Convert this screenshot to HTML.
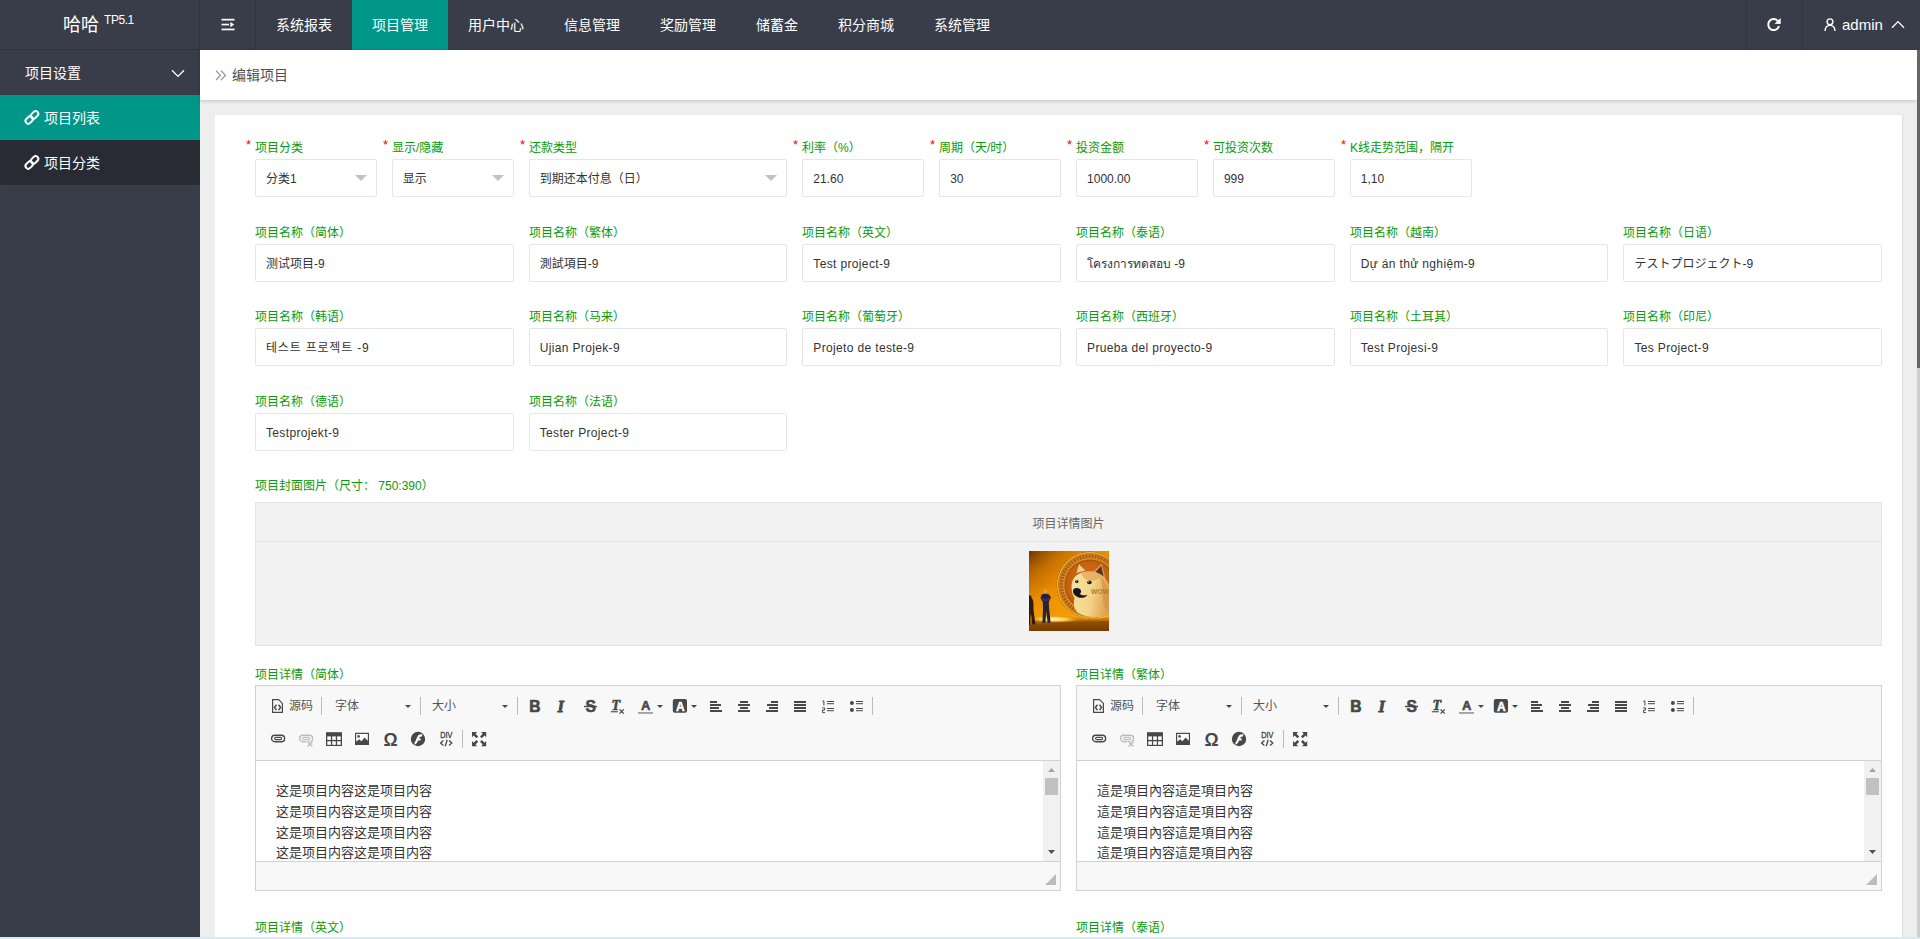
<!DOCTYPE html>
<html lang="zh-CN">
<head>
<meta charset="utf-8">
<title>编辑项目</title>
<style>
*{box-sizing:border-box;margin:0;padding:0}
html,body{width:1920px;height:939px;overflow:hidden}
body{position:relative;background:#eeeeee;font-family:"Liberation Sans","Noto Sans CJK SC",sans-serif;font-size:14px;color:#333;line-height:1}
svg{display:block;position:absolute;overflow:visible}
#hd{position:absolute;left:0;top:0;width:1920px;height:50px;background:#393d49}
#logo .t{position:absolute;left:63px;top:13px;font-size:18px;line-height:24px;white-space:nowrap;color:#fff}
#logo .s{position:absolute;left:104px;top:13px;font-size:12px;line-height:14px;color:#fff;letter-spacing:-0.45px}
.nav{position:absolute;top:0;height:50px;line-height:50px;color:#fff;font-size:14px;text-align:center;white-space:nowrap}
.nav.on{background:#009688}
.vsep{position:absolute;top:0;width:1px;height:50px;background:#32353f}
#admin{position:absolute;left:1842px;top:0;line-height:49px;font-size:15px;color:#fff}
#side{position:absolute;left:0;top:50px;width:200px;height:889px;background:#393d49}
.sitem{position:absolute;left:0;width:200px;height:45px;line-height:45px;color:#fff;font-size:14px;white-space:nowrap}
.sitem span{position:absolute;top:1px}
#crumb{position:absolute;left:200px;top:50px;width:1717px;height:50px;background:#fff;box-shadow:0 1px 4px rgba(0,0,0,.18)}
#crumb .t{position:absolute;left:32px;top:0;line-height:50px;font-size:14px;color:#505050}
#card{position:absolute;left:215px;top:115px;width:1687px;height:840px;background:#fff;box-shadow:1px 0 2px rgba(0,0,0,.06)}
.lb{position:absolute;font-size:12px;line-height:16px;color:#0a9a0a;white-space:nowrap}
.lb i{position:absolute;left:-9px;top:-3px;color:#ff0000;font-style:normal;font-size:13px}
.ip{position:absolute;height:38px;border:1px solid #e6e6e6;border-radius:2px;background:#fff;font-size:12px;line-height:37px;padding:1px 0 0 10px;color:#333;white-space:nowrap;overflow:hidden}
.ip.sel:after{content:"";position:absolute;right:9px;top:15px;border:6px solid transparent;border-top-color:#c2c2c2}
#imgp{position:absolute;left:255px;top:502px;width:1627px;height:144px;background:#f2f2f2;border:1px solid #e6e6e6}
#imgp .h{position:absolute;left:0;top:0;width:100%;height:39px;border-bottom:1px solid #e6e6e6;text-align:center;line-height:40px;padding-top:1px;font-size:12px;color:#666}
.ed{position:absolute;top:685px;width:806px;height:206px;border:1px solid #d1d1d1;background:#f8f8f8}
.ed .tb{position:absolute;left:0;top:0;width:804px;height:75px;border-bottom:1px solid #d1d1d1}
.ed .ct{position:absolute;left:0;top:75px;width:804px;height:101px;background:#fff;border-bottom:1px solid #d1d1d1;overflow:hidden}
.ed .ct p{position:absolute;left:20px;font-size:13px;line-height:21px;color:#333;white-space:nowrap}
.ed .sb{position:absolute;right:0;top:0;width:17px;height:100px;background:#f1f1f1}
.ed .th{position:absolute;left:2px;top:17px;width:13px;height:17px;background:#c1c1c1}
.ed .tx{position:absolute;font-size:12px;line-height:16px;color:#555;white-space:nowrap}
.ed .sp{position:absolute;width:1px;height:18px;background:#bcbcbc}
.ed .ar{position:absolute;width:0;height:0;border:3px solid transparent;border-top-color:#484848;border-bottom-width:0}
#vs{position:absolute;left:1917px;top:50px;width:3px;height:889px;background:#cfcfcf}
#vs div{width:3px;height:318px;background:#666}
#bl{position:absolute;left:0;top:937px;width:1920px;height:2px;background:#d6ebf3}
</style>
</head>
<body>
<div id="hd">
<div id="logo"><span class="t">哈哈</span><span class="s">TP5.1</span></div>
<div style="position:absolute;left:0;top:49px;width:199px;height:1px;background:rgba(0,0,0,.16)"></div>
<div class="vsep" style="left:199px"></div><div class="vsep" style="left:255px"></div>
<svg style="left:221px;top:18px" width="14" height="13" viewBox="0 0 14 13"><g fill="#fff"><rect x="0.5" y="0.8" width="13" height="1.7"/><rect x="0.5" y="5.7" width="7.5" height="1.7"/><rect x="0.5" y="10.6" width="13" height="1.7"/><path d="M9.3 3.9 L13.3 6.55 L9.3 9.2z"/></g></svg>
<div class="nav" style="left:256px;width:96px">系统报表</div>
<div class="nav on" style="left:352px;width:96px">项目管理</div>
<div class="nav" style="left:448px;width:96px">用户中心</div>
<div class="nav" style="left:544px;width:96px">信息管理</div>
<div class="nav" style="left:640px;width:96px">奖励管理</div>
<div class="nav" style="left:736px;width:82px">储蓄金</div>
<div class="nav" style="left:818px;width:96px">积分商城</div>
<div class="nav" style="left:914px;width:96px">系统管理</div>
<div class="vsep" style="left:1746px"></div><div class="vsep" style="left:1802px"></div>
<svg style="left:1766px;top:17px" width="15" height="15" viewBox="0 0 15 15"><path d="M11.6 3.7 A5.5 5.5 0 1 0 13 9.1" fill="none" stroke="#fff" stroke-width="2"/><path d="M14.7 0.9 V6.9 L8.5 6.7z" fill="#fff"/></svg>
<svg style="left:1824px;top:17px" width="12" height="15" viewBox="0 0 12 15"><circle cx="6" cy="4.8" r="2.9" fill="none" stroke="#fff" stroke-width="1.4"/><path d="M1 14 C1.2 10 3.4 8.4 6 8.4 C8.6 8.4 10.8 10 11 14" fill="none" stroke="#fff" stroke-width="1.4"/></svg>
<div id="admin">admin</div>
<svg style="left:1891px;top:20px" width="14" height="9" viewBox="0 0 14 9"><path d="M1 7.8 L7 1.6 L13 7.8" fill="none" stroke="#fff" stroke-width="1.3"/></svg>
</div>
<div id="side">
<div class="sitem" style="top:0"><span style="left:25px">项目设置</span><svg style="left:171px;top:19px" width="14" height="9" viewBox="0 0 14 9"><path d="M1 1.2 L7 7.4 L13 1.2" fill="none" stroke="#fff" stroke-width="1.3"/></svg></div>
<div class="sitem" style="top:45px;background:#009688"><svg style="left:24px;top:15px" width="16" height="15" viewBox="0 0 16 15"><g fill="none" stroke="#fff" stroke-width="2"><rect x="-4.1" y="-2.7" width="8.2" height="5.4" rx="2.7" transform="translate(5.2 10) rotate(-45)"/><rect x="-4.1" y="-2.7" width="8.2" height="5.4" rx="2.7" transform="translate(10.6 4.8) rotate(-45)"/></g></svg><span style="left:44px">项目列表</span></div>
<div class="sitem" style="top:90px;background:#282b33;border-radius:0 0 2px 2px"><svg style="left:24px;top:15px" width="16" height="15" viewBox="0 0 16 15"><g fill="none" stroke="#fff" stroke-width="2"><rect x="-4.1" y="-2.7" width="8.2" height="5.4" rx="2.7" transform="translate(5.2 10) rotate(-45)"/><rect x="-4.1" y="-2.7" width="8.2" height="5.4" rx="2.7" transform="translate(10.6 4.8) rotate(-45)"/></g></svg><span style="left:44px">项目分类</span></div>
</div>
<div id="crumb"><svg style="left:15px;top:20px" width="12" height="11" viewBox="0 0 12 11"><path d="M1 0.8 L5.4 5.4 L1 10 M6 0.8 L10.4 5.4 L6 10" fill="none" stroke="#999" stroke-width="1.3"/></svg><span class="t">编辑项目</span></div>
<div id="card"></div>
<div class="lb" style="left:255px;top:140px"><i>*</i>项目分类</div>
<div class="ip sel" style="left:255px;top:159px;width:121.84px">分类1</div>
<div class="lb" style="left:392px;top:140px"><i>*</i>显示/隐藏</div>
<div class="ip sel" style="left:391.84px;top:159px;width:121.84px">显示</div>
<div class="lb" style="left:529px;top:140px"><i>*</i>还款类型</div>
<div class="ip sel" style="left:528.68px;top:159px;width:258.68px">到期还本付息（日）</div>
<div class="lb" style="left:802px;top:140px"><i>*</i>利率（%）</div>
<div class="ip" style="left:802.36px;top:159px;width:121.84px">21.60</div>
<div class="lb" style="left:939px;top:140px"><i>*</i>周期（天/时）</div>
<div class="ip" style="left:939.2px;top:159px;width:121.84px">30</div>
<div class="lb" style="left:1076px;top:140px"><i>*</i>投资金额</div>
<div class="ip" style="left:1076.04px;top:159px;width:121.84px">1000.00</div>
<div class="lb" style="left:1213px;top:140px"><i>*</i>可投资次数</div>
<div class="ip" style="left:1212.88px;top:159px;width:121.84px">999</div>
<div class="lb" style="left:1350px;top:140px"><i>*</i>K线走势范围，隔开</div>
<div class="ip" style="left:1349.72px;top:159px;width:121.84px">1,10</div>
<div class="lb" style="left:255px;top:225px">项目名称（简体）</div>
<div class="ip" style="left:255px;top:244px;width:258.68px">测试项目-9</div>
<div class="lb" style="left:529px;top:225px">项目名称（繁体）</div>
<div class="ip" style="left:528.68px;top:244px;width:258.68px">測試項目-9</div>
<div class="lb" style="left:802px;top:225px">项目名称（英文）</div>
<div class="ip" style="left:802.36px;top:244px;width:258.68px;letter-spacing:0.35px">Test project-9</div>
<div class="lb" style="left:1076px;top:225px">项目名称（泰语）</div>
<div class="ip" style="left:1076.04px;top:244px;width:258.68px">โครงการทดสอบ -9</div>
<div class="lb" style="left:1350px;top:225px">项目名称（越南）</div>
<div class="ip" style="left:1349.72px;top:244px;width:258.68px;letter-spacing:0.35px">Dự án thử nghiệm-9</div>
<div class="lb" style="left:1623px;top:225px">项目名称（日语）</div>
<div class="ip" style="left:1623.4px;top:244px;width:258.68px">テストプロジェクト-9</div>
<div class="lb" style="left:255px;top:309px">项目名称（韩语）</div>
<div class="ip" style="left:255px;top:328px;width:258.68px;letter-spacing:0.8px">테스트 프로젝트 -9</div>
<div class="lb" style="left:529px;top:309px">项目名称（马来）</div>
<div class="ip" style="left:528.68px;top:328px;width:258.68px;letter-spacing:0.35px">Ujian Projek-9</div>
<div class="lb" style="left:802px;top:309px">项目名称（葡萄牙）</div>
<div class="ip" style="left:802.36px;top:328px;width:258.68px;letter-spacing:0.35px">Projeto de teste-9</div>
<div class="lb" style="left:1076px;top:309px">项目名称（西班牙）</div>
<div class="ip" style="left:1076.04px;top:328px;width:258.68px;letter-spacing:0.35px">Prueba del proyecto-9</div>
<div class="lb" style="left:1350px;top:309px">项目名称（土耳其）</div>
<div class="ip" style="left:1349.72px;top:328px;width:258.68px;letter-spacing:0.35px">Test Projesi-9</div>
<div class="lb" style="left:1623px;top:309px">项目名称（印尼）</div>
<div class="ip" style="left:1623.4px;top:328px;width:258.68px;letter-spacing:0.35px">Tes Project-9</div>
<div class="lb" style="left:255px;top:394px">项目名称（德语）</div>
<div class="ip" style="left:255px;top:413px;width:258.68px;letter-spacing:0.35px">Testprojekt-9</div>
<div class="lb" style="left:529px;top:394px">项目名称（法语）</div>
<div class="ip" style="left:528.68px;top:413px;width:258.68px;letter-spacing:0.35px">Tester Project-9</div>
<div class="lb" style="left:255px;top:478px">项目封面图片（尺寸： 750:390）</div>
<div id="imgp"><div class="h">项目详情图片</div>
<svg style="left:773px;top:48px" width="80" height="80" viewBox="0 0 80 80">
<defs>
<linearGradient id="sky" x1="0" y1="0" x2="0.55" y2="1"><stop offset="0" stop-color="#6e3600"/><stop offset="0.22" stop-color="#b86600"/><stop offset="0.5" stop-color="#ec8e00"/><stop offset="0.8" stop-color="#f59c00"/><stop offset="1" stop-color="#f8b020"/></linearGradient>
<linearGradient id="skyr" x1="0" y1="0" x2="1" y2="0"><stop offset="0" stop-color="#e88a00" stop-opacity="0"/><stop offset="1" stop-color="#f09000" stop-opacity="0.9"/></linearGradient>
<radialGradient id="glow" cx="0.45" cy="0.5" r="0.55"><stop offset="0" stop-color="#fffbe0"/><stop offset="0.45" stop-color="#ffd860" stop-opacity="0.95"/><stop offset="1" stop-color="#f7a400" stop-opacity="0"/></radialGradient>
<radialGradient id="coin" cx="0.5" cy="0.5" r="0.5"><stop offset="0" stop-color="#d4741a"/><stop offset="0.7" stop-color="#c4600e"/><stop offset="0.74" stop-color="#a85008"/><stop offset="0.78" stop-color="#d98c28"/><stop offset="0.94" stop-color="#cc7814"/><stop offset="0.97" stop-color="#e8b040"/><stop offset="1" stop-color="#a05a0a"/></radialGradient>
<linearGradient id="gnd" x1="0" y1="0" x2="0" y2="1"><stop offset="0" stop-color="#e89410"/><stop offset="0.4" stop-color="#a85e04"/><stop offset="1" stop-color="#6e3a02"/></linearGradient>
<linearGradient id="fur" x1="0" y1="0" x2="1" y2="0.2"><stop offset="0" stop-color="#f8e4a0"/><stop offset="0.6" stop-color="#f2d488"/><stop offset="1" stop-color="#e0a450"/></linearGradient>
<clipPath id="cp"><rect width="80" height="80"/></clipPath>
</defs>
<g clip-path="url(#cp)">
<rect width="80" height="80" fill="url(#sky)"/>
<rect width="80" height="30" fill="url(#skyr)"/>
<circle cx="61" cy="34" r="33.4" fill="url(#coin)"/>
<circle cx="61" cy="34" r="28.6" fill="none" stroke="#7a3c06" stroke-width="3.4" stroke-dasharray="1.6 1.5" opacity="0.55"/>
<circle cx="61" cy="34" r="32.4" fill="none" stroke="#f0c050" stroke-width="1" stroke-dasharray="0.8 0.8" opacity="0.8"/>
<path d="M0 68 Q24 63.5 46 66 Q60 70 80 66 V80 H0z" fill="url(#gnd)"/>
<ellipse cx="27" cy="68.2" rx="25" ry="3.4" fill="url(#glow)"/>
<path d="M0 74 Q30 70.5 80 70 V80 H0z" fill="#7a4002" opacity="0.55"/>
<path d="M47.4 22 L50 13.2 L56.4 19.6z" fill="#f0c890"/>
<path d="M64 21 L72.6 12.6 L76.6 28z" fill="#d89858"/>
<path d="M66.4 21 L72.2 15 L74.6 25.4z" fill="#5a3420"/>
<path d="M42.6 36 C42 25 52 19.4 62 20.6 C72 21 79 28 81 38 V64 C70 67.6 56 66.6 48.6 61.6 C44 57 44.4 51 45.6 47 C43 43.6 42.6 39.6 42.6 36z" fill="url(#fur)"/>
<path d="M52 21.4 C58 19.6 66 20.2 72 24 C70 29 64 31 58.6 29 C55.6 27.6 53 25 52 21.4z" fill="#e2a858" opacity="0.75"/>
<path d="M70 24 C76 28 79 36 80 46 V62 C76 58 73 50 73.4 42 C73.6 34 72.6 28 70 24z" fill="#d8904a" opacity="0.7"/>
<ellipse cx="47.8" cy="30.5" rx="1.7" ry="1.5" fill="#1e1410"/>
<ellipse cx="60.4" cy="31.4" rx="2.3" ry="1.8" fill="#1e1410"/>
<circle cx="47.4" cy="30" r="0.5" fill="#fff"/><circle cx="59.8" cy="30.8" r="0.6" fill="#fff"/>
<path d="M44 39.6 C44.4 36.8 48.6 36.4 51 38 C52.4 39.2 52.4 41.6 51 43 C53.4 45 56.4 44.6 58.2 43.4 C57.6 46.6 52 47.8 48.6 46 C45.4 44.6 43.6 42.4 44 39.6z" fill="#181424"/>
<text x="62" y="43.2" font-family="Liberation Sans, sans-serif" font-size="6.8" font-weight="bold" fill="#b47c24">WOW</text>
<path d="M0 44.4 C1.6 44 2.8 45.4 2.6 47 C4.4 48.6 4.8 53 4.4 58 L6.4 73.6 H3.4 L1.8 62 L1 73.8 H0z" fill="#2c1c0c"/>
<circle cx="16.3" cy="40.2" r="1.9" fill="#d0a060"/>
<path d="M16.3 38 C17.6 38 18.4 38.8 18.3 40 C17.6 39.2 15.6 39.2 14.4 40 C14.4 38.8 15.2 38 16.3 38z" fill="#c8a040"/>
<path d="M12.8 43.6 C14.6 42.4 18 42.4 20 43.6 L22 46.4 L20.4 49.6 L19.8 51 L20.2 58 L21.6 71.8 H18.6 L17.2 60 L16.4 72 H13.4 L14 58 L13.8 51 L11.4 47z" fill="#26223a"/>
<path d="M11.8 46.4 L16.6 48.4 L21.6 46 L20.6 49.2 L16.4 50.2 L12.4 48.8z" fill="#3a3658"/>
</g>
</svg>
</div>
<div class="lb" style="left:255px;top:667px">项目详情（简体）</div>
<div class="ed" style="left:255px">
<div class="tb">
<svg style="left:14px;top:12px" width="16" height="16" viewBox="0 0 16 16"><path d="M2.6 1.6 H8.6 L12.4 5.4 V14.4 H2.6z" fill="none" stroke="#484848" stroke-width="1.2"/><path d="M6.5 6.7 L4.4 9.4 L6.5 12.1 M8.5 6.7 L10.6 9.4 L8.5 12.1" fill="none" stroke="#484848" stroke-width="1.5"/></svg>
<span class="tx" style="left:33px;top:12px">源码</span>
<span class="sp" style="left:65px;top:11px"></span>
<span class="tx" style="left:79px;top:12px">字体</span><span class="ar" style="left:149px;top:19px"></span>
<span class="sp" style="left:164px;top:11px"></span>
<span class="tx" style="left:176px;top:12px">大小</span><span class="ar" style="left:246px;top:19px"></span>
<span class="sp" style="left:261px;top:11px"></span>
<svg style="left:270px;top:12px" width="16" height="16" viewBox="0 0 16 16"><text x="3.2" y="14" font-family="Liberation Sans, sans-serif" font-size="15.6" font-weight="bold"  stroke="#484848" stroke-width="0.7" stroke-linejoin="round" fill="#484848">B</text></svg>
<svg style="left:298px;top:12px" width="16" height="16" viewBox="0 0 16 16"><text x="3.6" y="14" font-family="Liberation Serif, serif" font-size="16.6" font-weight="bold" font-style="italic" stroke="#484848" stroke-width="0.8" stroke-linejoin="round" fill="#484848">I</text></svg>
<svg style="left:326px;top:12px" width="16" height="16" viewBox="0 0 16 16"><text x="3.4" y="14" font-family="Liberation Sans, sans-serif" font-size="15.6" font-weight="bold"  stroke="#484848" stroke-width="0.6" stroke-linejoin="round" fill="#484848">S</text><rect x="2" y="7.8" width="13" height="1.4" fill="#484848"/></svg>
<svg style="left:354px;top:12px" width="16" height="16" viewBox="0 0 16 16"><text x="1.6" y="12.4" font-family="Liberation Serif, serif" font-size="14" font-weight="bold" font-style="italic" stroke="#484848" stroke-width="0.6" stroke-linejoin="round" fill="#484848">T</text><rect x="0.8" y="13.2" width="7" height="1.1" fill="#484848"/><path d="M9.6 11.4 L13.8 15.6 M13.8 11.4 L9.6 15.6" stroke="#484848" stroke-width="1.3" fill="none"/></svg>
<svg style="left:382px;top:12px" width="16" height="16" viewBox="0 0 16 16"><text x="2.9" y="11.6" font-family="Liberation Sans, sans-serif" font-size="13" font-weight="bold"  stroke="#484848" stroke-width="0.6" stroke-linejoin="round" fill="#484848">A</text><rect x="0" y="14.1" width="15" height="1.7" fill="#9a9a9a"/></svg>
<span class="ar" style="left:400.5px;top:19px"></span>
<svg style="left:416px;top:12px" width="16" height="16" viewBox="0 0 16 16"><rect x="0.8" y="1" width="14.2" height="13.8" rx="2" fill="#484848"/><text x="3.9" y="13" font-family="Liberation Sans, sans-serif" font-size="12" font-weight="bold"  stroke="#fff" stroke-width="0.5" stroke-linejoin="round" fill="#fff">A</text></svg>
<span class="ar" style="left:435px;top:19px"></span>
<svg style="left:452px;top:12px" width="16" height="16" viewBox="0 0 16 16"><g fill="#484848"><rect x="2" y="3" width="7" height="2"/><rect x="2" y="6" width="11" height="2"/><rect x="2" y="9" width="9" height="2"/><rect x="2" y="12" width="12" height="2"/></g></svg>
<svg style="left:480px;top:12px" width="16" height="16" viewBox="0 0 16 16"><g fill="#484848"><rect x="4" y="3" width="8" height="2"/><rect x="2" y="6" width="12" height="2"/><rect x="4" y="9" width="8" height="2"/><rect x="2" y="12" width="12" height="2"/></g></svg>
<svg style="left:508px;top:12px" width="16" height="16" viewBox="0 0 16 16"><g fill="#484848"><rect x="7" y="3" width="7" height="2"/><rect x="3" y="6" width="11" height="2"/><rect x="5" y="9" width="9" height="2"/><rect x="2" y="12" width="12" height="2"/></g></svg>
<svg style="left:536px;top:12px" width="16" height="16" viewBox="0 0 16 16"><g fill="#484848"><rect x="2" y="3" width="12" height="2"/><rect x="2" y="6" width="12" height="2"/><rect x="2" y="9" width="12" height="2"/><rect x="2" y="12" width="12" height="2"/></g></svg>
<svg style="left:564px;top:12px" width="16" height="16" viewBox="0 0 16 16"><g fill="#484848"><rect x="7" y="3" width="7" height="1"/><rect x="7" y="5.2" width="7" height="1"/><rect x="7" y="10" width="7" height="1"/><rect x="7" y="12.2" width="7" height="1"/></g><path d="M2.3 3.4 L3.9 2.8 V7.6 M2.2 9.9 H4.6 V12 H2.6 V14.6 H5" fill="none" stroke="#484848" stroke-width="1"/></svg>
<svg style="left:592px;top:12px" width="16" height="16" viewBox="0 0 16 16"><g fill="#484848"><circle cx="3.9" cy="5.1" r="2"/><circle cx="3.9" cy="12.1" r="2"/><rect x="8" y="3" width="7" height="1"/><rect x="8" y="5.2" width="7" height="1"/><rect x="8" y="10" width="7" height="1"/><rect x="8" y="12.2" width="7" height="1"/></g></svg>
<span class="sp" style="left:616px;top:11px"></span>
<svg style="left:14px;top:45px" width="16" height="16" viewBox="0 0 16 16"><g fill="none" stroke="#484848"><rect x="1.6" y="4.3" width="13" height="6.4" rx="3.2" stroke-width="1.4"/><rect x="4.6" y="6.4" width="7" height="2.2" rx="1.1" stroke-width="1.1"/></g></svg>
<svg style="left:42px;top:45px" width="16" height="16" viewBox="0 0 16 16"><g fill="none" stroke="#bdbdbd"><rect x="1.6" y="4.3" width="13" height="6.4" rx="3.2" stroke-width="1.4"/><rect x="4.6" y="6.4" width="7" height="2.2" rx="1.1" stroke-width="1.1"/></g><rect x="8" y="10.6" width="8" height="5.4" fill="#f8f8f8"/><path d="M9.6 10.8 L14.4 15.4 M14.4 10.8 L9.6 15.4" stroke="#bdbdbd" stroke-width="1.4" fill="none"/></svg>
<svg style="left:70px;top:45px" width="16" height="16" viewBox="0 0 16 16"><rect x="0" y="1.2" width="16" height="13.8" fill="#484848"/><g fill="#fff"><rect x="1.3" y="5.4" width="3.6" height="3.5"/><rect x="6.2" y="5.4" width="3.6" height="3.5"/><rect x="11.1" y="5.4" width="3.6" height="3.5"/><rect x="1.3" y="10.3" width="3.6" height="3.5"/><rect x="6.2" y="10.3" width="3.6" height="3.5"/><rect x="11.1" y="10.3" width="3.6" height="3.5"/></g></svg>
<svg style="left:98px;top:45px" width="16" height="16" viewBox="0 0 16 16"><rect x="1.6" y="2.4" width="12.8" height="11" fill="#fff" stroke="#484848" stroke-width="1.2"/><circle cx="4.6" cy="5.4" r="1.3" fill="#484848"/><path d="M2 13 V10.8 L5.2 8.2 L7.4 10.2 L10.6 6.6 L14 10 V13z" fill="#484848"/></svg>
<svg style="left:126px;top:45px" width="16" height="16" viewBox="0 0 16 16"><text x="1.4" y="15" font-family="Liberation Sans, sans-serif" font-size="17.6" font-weight="bold"  fill="#484848">Ω</text></svg>
<svg style="left:154px;top:45px" width="16" height="16" viewBox="0 0 16 16"><circle cx="8" cy="8" r="7.2" fill="#484848"/><path d="M4.6 12.6 C7.4 11.6 6.8 7.6 8.8 5.4 C9.8 4.4 11 4.2 12.2 4.4 M7 8.4 H10.6" fill="none" stroke="#fff" stroke-width="2.2"/></svg>
<svg style="left:182px;top:45px" width="16" height="16" viewBox="0 0 16 16"><text x="2.2" y="7.4" font-family="Liberation Sans, sans-serif" font-size="8.6" fill="#484848" stroke="#484848" stroke-width="0.35" textLength="12.2" lengthAdjust="spacingAndGlyphs">DIV</text><path d="M5.4 9.6 L2.6 12 L5.4 14.4 M11 9.6 L13.8 12 L11 14.4 M9.2 8.8 L7.2 15.2" fill="none" stroke="#484848" stroke-width="1.3"/></svg>
<span class="sp" style="left:206px;top:44px"></span>
<svg style="left:215px;top:45px" width="16" height="16" viewBox="0 0 16 16"><g fill="#484848"><path d="M1 1 H6.2 L4.5 2.7 L7.2 5.4 L5.4 7.2 L2.7 4.5 L1 6.2z"/><path d="M15.2 1 V6.2 L13.5 4.5 L10.8 7.2 L9 5.4 L11.7 2.7 L10 1z"/><path d="M1 15.2 V10 L2.7 11.7 L5.4 9 L7.2 10.8 L4.5 13.5 L6.2 15.2z"/><path d="M15.2 15.2 H10 L11.7 13.5 L9 10.8 L10.8 9 L13.5 11.7 L15.2 10z"/></g></svg>
</div>
<div class="ct">
<p style="top:19px">这是项目内容这是项目内容</p>
<p style="top:40px">这是项目内容这是项目内容</p>
<p style="top:61px">这是项目内容这是项目内容</p>
<p style="top:81px">这是项目内容这是项目内容</p>
<div class="sb"><div class="th"></div><svg style="left:5px;top:7px" width="7" height="4" viewBox="0 0 7 4"><path d="M0 4 L3.5 0 L7 4z" fill="#a3a3a3"/></svg><svg style="left:5px;top:89px" width="7" height="4" viewBox="0 0 7 4"><path d="M0 0 L3.5 4 L7 0z" fill="#505050"/></svg></div>
</div>
<svg style="left:789px;top:188px" width="11" height="11" viewBox="0 0 11 11"><path d="M11 0 V11 H0z" fill="#bcbcbc"/></svg>
</div>
<div class="lb" style="left:1076px;top:667px">项目详情（繁体）</div>
<div class="ed" style="left:1076px">
<div class="tb">
<svg style="left:14px;top:12px" width="16" height="16" viewBox="0 0 16 16"><path d="M2.6 1.6 H8.6 L12.4 5.4 V14.4 H2.6z" fill="none" stroke="#484848" stroke-width="1.2"/><path d="M6.5 6.7 L4.4 9.4 L6.5 12.1 M8.5 6.7 L10.6 9.4 L8.5 12.1" fill="none" stroke="#484848" stroke-width="1.5"/></svg>
<span class="tx" style="left:33px;top:12px">源码</span>
<span class="sp" style="left:65px;top:11px"></span>
<span class="tx" style="left:79px;top:12px">字体</span><span class="ar" style="left:149px;top:19px"></span>
<span class="sp" style="left:164px;top:11px"></span>
<span class="tx" style="left:176px;top:12px">大小</span><span class="ar" style="left:246px;top:19px"></span>
<span class="sp" style="left:261px;top:11px"></span>
<svg style="left:270px;top:12px" width="16" height="16" viewBox="0 0 16 16"><text x="3.2" y="14" font-family="Liberation Sans, sans-serif" font-size="15.6" font-weight="bold"  stroke="#484848" stroke-width="0.7" stroke-linejoin="round" fill="#484848">B</text></svg>
<svg style="left:298px;top:12px" width="16" height="16" viewBox="0 0 16 16"><text x="3.6" y="14" font-family="Liberation Serif, serif" font-size="16.6" font-weight="bold" font-style="italic" stroke="#484848" stroke-width="0.8" stroke-linejoin="round" fill="#484848">I</text></svg>
<svg style="left:326px;top:12px" width="16" height="16" viewBox="0 0 16 16"><text x="3.4" y="14" font-family="Liberation Sans, sans-serif" font-size="15.6" font-weight="bold"  stroke="#484848" stroke-width="0.6" stroke-linejoin="round" fill="#484848">S</text><rect x="2" y="7.8" width="13" height="1.4" fill="#484848"/></svg>
<svg style="left:354px;top:12px" width="16" height="16" viewBox="0 0 16 16"><text x="1.6" y="12.4" font-family="Liberation Serif, serif" font-size="14" font-weight="bold" font-style="italic" stroke="#484848" stroke-width="0.6" stroke-linejoin="round" fill="#484848">T</text><rect x="0.8" y="13.2" width="7" height="1.1" fill="#484848"/><path d="M9.6 11.4 L13.8 15.6 M13.8 11.4 L9.6 15.6" stroke="#484848" stroke-width="1.3" fill="none"/></svg>
<svg style="left:382px;top:12px" width="16" height="16" viewBox="0 0 16 16"><text x="2.9" y="11.6" font-family="Liberation Sans, sans-serif" font-size="13" font-weight="bold"  stroke="#484848" stroke-width="0.6" stroke-linejoin="round" fill="#484848">A</text><rect x="0" y="14.1" width="15" height="1.7" fill="#9a9a9a"/></svg>
<span class="ar" style="left:400.5px;top:19px"></span>
<svg style="left:416px;top:12px" width="16" height="16" viewBox="0 0 16 16"><rect x="0.8" y="1" width="14.2" height="13.8" rx="2" fill="#484848"/><text x="3.9" y="13" font-family="Liberation Sans, sans-serif" font-size="12" font-weight="bold"  stroke="#fff" stroke-width="0.5" stroke-linejoin="round" fill="#fff">A</text></svg>
<span class="ar" style="left:435px;top:19px"></span>
<svg style="left:452px;top:12px" width="16" height="16" viewBox="0 0 16 16"><g fill="#484848"><rect x="2" y="3" width="7" height="2"/><rect x="2" y="6" width="11" height="2"/><rect x="2" y="9" width="9" height="2"/><rect x="2" y="12" width="12" height="2"/></g></svg>
<svg style="left:480px;top:12px" width="16" height="16" viewBox="0 0 16 16"><g fill="#484848"><rect x="4" y="3" width="8" height="2"/><rect x="2" y="6" width="12" height="2"/><rect x="4" y="9" width="8" height="2"/><rect x="2" y="12" width="12" height="2"/></g></svg>
<svg style="left:508px;top:12px" width="16" height="16" viewBox="0 0 16 16"><g fill="#484848"><rect x="7" y="3" width="7" height="2"/><rect x="3" y="6" width="11" height="2"/><rect x="5" y="9" width="9" height="2"/><rect x="2" y="12" width="12" height="2"/></g></svg>
<svg style="left:536px;top:12px" width="16" height="16" viewBox="0 0 16 16"><g fill="#484848"><rect x="2" y="3" width="12" height="2"/><rect x="2" y="6" width="12" height="2"/><rect x="2" y="9" width="12" height="2"/><rect x="2" y="12" width="12" height="2"/></g></svg>
<svg style="left:564px;top:12px" width="16" height="16" viewBox="0 0 16 16"><g fill="#484848"><rect x="7" y="3" width="7" height="1"/><rect x="7" y="5.2" width="7" height="1"/><rect x="7" y="10" width="7" height="1"/><rect x="7" y="12.2" width="7" height="1"/></g><path d="M2.3 3.4 L3.9 2.8 V7.6 M2.2 9.9 H4.6 V12 H2.6 V14.6 H5" fill="none" stroke="#484848" stroke-width="1"/></svg>
<svg style="left:592px;top:12px" width="16" height="16" viewBox="0 0 16 16"><g fill="#484848"><circle cx="3.9" cy="5.1" r="2"/><circle cx="3.9" cy="12.1" r="2"/><rect x="8" y="3" width="7" height="1"/><rect x="8" y="5.2" width="7" height="1"/><rect x="8" y="10" width="7" height="1"/><rect x="8" y="12.2" width="7" height="1"/></g></svg>
<span class="sp" style="left:616px;top:11px"></span>
<svg style="left:14px;top:45px" width="16" height="16" viewBox="0 0 16 16"><g fill="none" stroke="#484848"><rect x="1.6" y="4.3" width="13" height="6.4" rx="3.2" stroke-width="1.4"/><rect x="4.6" y="6.4" width="7" height="2.2" rx="1.1" stroke-width="1.1"/></g></svg>
<svg style="left:42px;top:45px" width="16" height="16" viewBox="0 0 16 16"><g fill="none" stroke="#bdbdbd"><rect x="1.6" y="4.3" width="13" height="6.4" rx="3.2" stroke-width="1.4"/><rect x="4.6" y="6.4" width="7" height="2.2" rx="1.1" stroke-width="1.1"/></g><rect x="8" y="10.6" width="8" height="5.4" fill="#f8f8f8"/><path d="M9.6 10.8 L14.4 15.4 M14.4 10.8 L9.6 15.4" stroke="#bdbdbd" stroke-width="1.4" fill="none"/></svg>
<svg style="left:70px;top:45px" width="16" height="16" viewBox="0 0 16 16"><rect x="0" y="1.2" width="16" height="13.8" fill="#484848"/><g fill="#fff"><rect x="1.3" y="5.4" width="3.6" height="3.5"/><rect x="6.2" y="5.4" width="3.6" height="3.5"/><rect x="11.1" y="5.4" width="3.6" height="3.5"/><rect x="1.3" y="10.3" width="3.6" height="3.5"/><rect x="6.2" y="10.3" width="3.6" height="3.5"/><rect x="11.1" y="10.3" width="3.6" height="3.5"/></g></svg>
<svg style="left:98px;top:45px" width="16" height="16" viewBox="0 0 16 16"><rect x="1.6" y="2.4" width="12.8" height="11" fill="#fff" stroke="#484848" stroke-width="1.2"/><circle cx="4.6" cy="5.4" r="1.3" fill="#484848"/><path d="M2 13 V10.8 L5.2 8.2 L7.4 10.2 L10.6 6.6 L14 10 V13z" fill="#484848"/></svg>
<svg style="left:126px;top:45px" width="16" height="16" viewBox="0 0 16 16"><text x="1.4" y="15" font-family="Liberation Sans, sans-serif" font-size="17.6" font-weight="bold"  fill="#484848">Ω</text></svg>
<svg style="left:154px;top:45px" width="16" height="16" viewBox="0 0 16 16"><circle cx="8" cy="8" r="7.2" fill="#484848"/><path d="M4.6 12.6 C7.4 11.6 6.8 7.6 8.8 5.4 C9.8 4.4 11 4.2 12.2 4.4 M7 8.4 H10.6" fill="none" stroke="#fff" stroke-width="2.2"/></svg>
<svg style="left:182px;top:45px" width="16" height="16" viewBox="0 0 16 16"><text x="2.2" y="7.4" font-family="Liberation Sans, sans-serif" font-size="8.6" fill="#484848" stroke="#484848" stroke-width="0.35" textLength="12.2" lengthAdjust="spacingAndGlyphs">DIV</text><path d="M5.4 9.6 L2.6 12 L5.4 14.4 M11 9.6 L13.8 12 L11 14.4 M9.2 8.8 L7.2 15.2" fill="none" stroke="#484848" stroke-width="1.3"/></svg>
<span class="sp" style="left:206px;top:44px"></span>
<svg style="left:215px;top:45px" width="16" height="16" viewBox="0 0 16 16"><g fill="#484848"><path d="M1 1 H6.2 L4.5 2.7 L7.2 5.4 L5.4 7.2 L2.7 4.5 L1 6.2z"/><path d="M15.2 1 V6.2 L13.5 4.5 L10.8 7.2 L9 5.4 L11.7 2.7 L10 1z"/><path d="M1 15.2 V10 L2.7 11.7 L5.4 9 L7.2 10.8 L4.5 13.5 L6.2 15.2z"/><path d="M15.2 15.2 H10 L11.7 13.5 L9 10.8 L10.8 9 L13.5 11.7 L15.2 10z"/></g></svg>
</div>
<div class="ct">
<p style="top:19px">這是項目內容這是項目內容</p>
<p style="top:40px">這是項目內容這是項目內容</p>
<p style="top:61px">這是項目內容這是項目內容</p>
<p style="top:81px">這是項目內容這是項目內容</p>
<div class="sb"><div class="th"></div><svg style="left:5px;top:7px" width="7" height="4" viewBox="0 0 7 4"><path d="M0 4 L3.5 0 L7 4z" fill="#a3a3a3"/></svg><svg style="left:5px;top:89px" width="7" height="4" viewBox="0 0 7 4"><path d="M0 0 L3.5 4 L7 0z" fill="#505050"/></svg></div>
</div>
<svg style="left:789px;top:188px" width="11" height="11" viewBox="0 0 11 11"><path d="M11 0 V11 H0z" fill="#bcbcbc"/></svg>
</div>
<div class="lb" style="left:255px;top:920px">项目详情（英文）</div>
<div class="lb" style="left:1076px;top:920px">项目详情（泰语）</div>
<div id="vs"><div></div></div>
<div id="bl"></div>
</body>
</html>
